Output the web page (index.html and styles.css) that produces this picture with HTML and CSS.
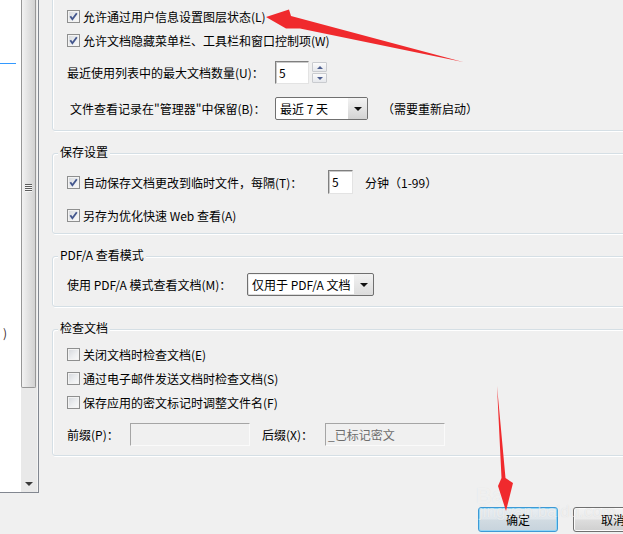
FILE: index.html
```html
<!DOCTYPE html>
<html lang="zh-CN">
<head>
<meta charset="utf-8">
<title>首选项</title>
<link rel="stylesheet" href="styles.css">
</head>
<body>
<div class="page">
  <aside class="sidebar">
    <div class="list">
      <div class="sel-line"></div>
      <div class="paren">)</div>
    </div>
    <div class="vscroll">
      <div class="thumb"><span class="grip"></span></div>
      <div class="track"></div>
      <div class="arrow-down"><i class="tri-s"></i></div>
    </div>
  </aside>

  <main class="content">
    <section class="group group-top">
      <div class="row">
        <label class="check"><span class="box on"><svg viewBox="0 0 11 11" width="11" height="11"><path d="M2.3 5.2 L4.4 8.2 L8.8 2.3" /></svg></span><span>允许通过用户信息设置图层状态(L)</span></label>
      </div>
      <div class="row">
        <label class="check"><span class="box on"><svg viewBox="0 0 11 11" width="11" height="11"><path d="M2.3 5.2 L4.4 8.2 L8.8 2.3" /></svg></span><span>允许文档隐藏菜单栏、工具栏和窗口控制项(W)</span></label>
      </div>
      <div class="row h23 mt9">
        <span class="lbl w208">最近使用列表中的最大文档数量(U)：</span>
        <span class="field spin-input">5</span>
        <span class="spin">
          <span class="spin-btn"><i class="tri-up"></i></span>
          <span class="spin-btn"><i class="tri-down"></i></span>
        </span>
      </div>
      <div class="row h23 mt13">
        <span class="lbl w208 pl3">文件查看记录在&quot;管理器&quot;中保留(B)：</span>
        <span class="combo w93"><span class="combo-text">最近 7 天</span><span class="combo-btn"><i class="tri"></i></span></span>
        <span class="note">（需要重新启动）</span>
      </div>
    </section>

    <fieldset class="group g2">
      <legend>保存设置</legend>
      <div class="gbody">
        <div class="row">
          <label class="check w261"><span class="box on"><svg viewBox="0 0 11 11" width="11" height="11"><path d="M2.3 5.2 L4.4 8.2 L8.8 2.3" /></svg></span><span>自动保存文档更改到临时文件，每隔(T)：</span></label>
          <span class="field num">5</span>
          <span class="unit">分钟（1-99）</span>
        </div>
        <div class="row mt9">
          <label class="check"><span class="box on"><svg viewBox="0 0 11 11" width="11" height="11"><path d="M2.3 5.2 L4.4 8.2 L8.8 2.3" /></svg></span><span>另存为优化快速 Web 查看(A)</span></label>
        </div>
      </div>
    </fieldset>

    <fieldset class="group g3">
      <legend>PDF/A 查看模式</legend>
      <div class="gbody">
        <div class="row h23">
          <span class="lbl w180">使用 PDF/A 模式查看文档(M)：</span>
          <span class="combo w127 inset"><span class="combo-text">仅用于 PDF/A 文档</span><span class="combo-btn"><i class="tri"></i></span></span>
        </div>
      </div>
    </fieldset>

    <fieldset class="group g4">
      <legend>检查文档</legend>
      <div class="gbody">
        <div class="row">
          <label class="check"><span class="box"></span><span>关闭文档时检查文档(E)</span></label>
        </div>
        <div class="row">
          <label class="check"><span class="box"></span><span>通过电子邮件发送文档时检查文档(S)</span></label>
        </div>
        <div class="row">
          <label class="check"><span class="box"></span><span>保存应用的密文标记时调整文件名(F)</span></label>
        </div>
        <div class="row h23 mt9">
          <span class="lbl w63">前缀(P)：</span>
          <span class="field dis"></span>
          <span class="lbl w63 ml12">后缀(X)：</span>
          <span class="field dis">_已标记密文</span>
        </div>
      </div>
    </fieldset>

    <div class="buttons">
      <button class="btn default" type="button">确定</button>
      <button class="btn" type="button">取消</button>
    </div>
  </main>

  <div class="wm-logo">Bai</div>
  <div class="wm-url">jingyan.baidu.com</div>

  <svg class="annot" width="623" height="534" viewBox="0 0 623 534">
    <path d="M266,17 L289,9.5 L291,16 L463,62 L300,28.5 L286,28.5 Z" fill="#f02a2d"/>
    <path d="M497,386 L505.5,478 L513,483 L506,511 L498,486 L501.5,478 Z" fill="#f02a2d"/>
  </svg>
</div>
</body>
</html>
```

FILE: styles.css
```css
* { box-sizing: border-box; }
html, body { margin: 0; padding: 0; background: #f0f0f0; }
body {
  font-family: "Microsoft YaHei", "Noto Sans CJK SC", sans-serif;
  font-size: 12px;
  color: #000;
}
.page {
  position: relative;
  width: 623px;
  height: 534px;
  overflow: hidden;
  display: flex;
  align-items: flex-start;
  background: #f0f0f0;
}

/* left navigation pane */
.sidebar {
  flex: none;
  display: flex;
  width: 39px;
  height: 493px;
  border-right: 1px solid #828790;
  border-bottom: 1px solid #828790;
}
.list { width: 21px; height: 100%; background: #fff; }
.sel-line { margin-top: 63px; width: 16px; height: 1px; background: #3399ff; }
.paren { margin-top: 261px; padding-left: 3px; line-height: 16px; color: #3a2a2a; }
.vscroll {
  width: 17px;
  height: 100%;
  display: flex;
  flex-direction: column;
  background: #e9e9e9;
  border-right: 1px solid #f4f4f4;
}
.thumb {
  flex: none;
  width: 15px;
  height: 388px;
  padding-top: 184px;
  border: 1px solid #979797;
  border-top: none;
  border-radius: 0 0 2px 2px;
  background: linear-gradient(to right, #f2f2f2 0%, #e3e3e3 45%, #d2d2d2 100%);
}
.grip {
  display: block;
  margin-left: 3px;
  width: 7px;
  height: 8px;
  background: repeating-linear-gradient(to bottom, #5c5c5c 0 1px, #f6f6f6 1px 2px);
}
.track { flex: 1; }
.arrow-down {
  flex: none;
  height: 17px;
  display: flex;
  align-items: center;
  justify-content: center;
}
.tri-s {
  width: 0; height: 0;
  border-left: 4px solid transparent;
  border-right: 4px solid transparent;
  border-top: 4px solid #3a3a3a;
}

/* main content */
.content {
  flex: none;
  margin-left: 13px;
  width: 640px;
  display: flex;
  flex-direction: column;
}
.group {
  border: 1px solid #d5dfe5;
  border-radius: 3px;
  box-shadow: inset 1px 1px 0 #fff, 1px 1px 0 #fff;
}
.group-top { margin-top: -20px; padding: 23px 0 10px 14px; }
fieldset.group { margin: 13px 0 0; min-width: 0; padding: 7px 0 6px 5px; }
fieldset.g3 { padding-bottom: 10px; }
fieldset.g4 { padding-top: 3px; padding-bottom: 9px; }
legend {
  padding: 0 2px 3px;
  line-height: 16px;
  background: #f0f0f0;
}
.gbody { padding-left: 9px; }

.row {
  display: flex;
  align-items: center;
  height: 24px;
  white-space: nowrap;
}
.row.h23 { height: 23px; }
.mt9 { margin-top: 9px; }
.mt13 { margin-top: 13px; }
.ml12 { margin-left: 12px; }
.pl3 { padding-left: 3px; }
.lbl { flex: none; }
.w208 { width: 208px; }
.w180 { width: 180px; }
.w63 { width: 63px; }
.w261 { width: 261px; flex: none; }

/* checkbox */
.check { display: flex; align-items: center; }
.box {
  flex: none;
  width: 13px;
  height: 13px;
  margin-right: 3px;
  border: 1px solid #8e8f8f;
  background: linear-gradient(135deg, #d3d6db 0%, #eceef0 55%, #fafafa 100%);
  box-shadow: inset 0 0 0 1px #f3f3f3;
  display: flex;
}
.box svg path { fill: none; stroke: #44578e; stroke-width: 1.9; }

/* text fields */
.field {
  flex: none;
  height: 23px;
  line-height: 21px;
  padding-left: 3px;
  border: 1px solid;
  border-color: #7f7f7f #e3e3e3 #e3e3e3 #7f7f7f;
  background: #fff;
  box-shadow: inset 1px 1px 0 #c9c9c9;
}
.spin-input { width: 34px; }
.num { width: 25px; height: 24px; line-height: 22px; }
.unit { margin-left: 12px; }
.field.dis {
  width: 120px;
  background: #f0f0f0;
  color: #6d6d6d;
  padding-left: 2px;
  border-color: #a5a5a5 #fafafa #fafafa #a5a5a5;
  box-shadow: none;
}

/* spin buttons */
.spin {
  flex: none;
  margin-left: 3px;
  width: 15px;
  display: flex;
  flex-direction: column;
  gap: 1px;
}
.spin-btn {
  height: 10px;
  border: 1px solid #c9cbcf;
  border-radius: 1px;
  background: linear-gradient(#fbfbfb, #e6e8ec);
  display: flex;
  align-items: center;
  justify-content: center;
}
.tri-up, .tri-down {
  width: 0; height: 0;
  border-left: 3px solid transparent;
  border-right: 3px solid transparent;
}
.tri-up { border-bottom: 3px solid #4d5e8f; }
.tri-down { border-top: 3px solid #4d5e8f; }

/* combo boxes */
.combo {
  flex: none;
  display: flex;
  height: 23px;
  border: 1px solid #707070;
  border-radius: 2px;
  background: #fff;
  overflow: hidden;
}
.w93 { width: 93px; }
.w127 { width: 127px; }
.combo-text {
  flex: 1;
  padding-left: 4px;
  line-height: 21px;
  white-space: nowrap;
  overflow: hidden;
}
.combo.inset { background: linear-gradient(#f2f2f2, #dcdcdc); padding: 1px 0 1px 1px; }
.combo.inset .combo-text { background: #fff; padding-left: 3px; line-height: 19px; }
.combo-btn {
  flex: none;
  width: 19px;
  background: linear-gradient(#f3f3f3, #e4e4e4 50%, #d3d3d3);
  display: flex;
  align-items: center;
  justify-content: center;
}
.combo.inset .combo-btn { background: transparent; }
.tri {
  width: 0; height: 0;
  border-left: 4px solid transparent;
  border-right: 4px solid transparent;
  border-top: 4px solid #111;
}
.note { margin-left: 14px; }

/* dialog buttons */
.buttons {
  display: flex;
  gap: 15px;
  margin-top: 51px;
  padding-left: 426px;
}
.btn {
  flex: none;
  width: 80px;
  height: 25px;
  padding: 0;
  font: inherit;
  color: #000;
  border: 1px solid #707070;
  border-radius: 3px;
  background: linear-gradient(#f2f2f2 0%, #ebebeb 48%, #dddddd 52%, #cfcfcf 100%);
  box-shadow: inset 0 0 0 1px #fbfbfb;
}
.btn.default {
  border-color: #3d9ad6;
  background: linear-gradient(#e9eef2 0%, #dfe6eb 48%, #d1dbe2 52%, #c7d3dc 100%);
  box-shadow: inset 0 0 0 1px #8fd6f6;
}

/* watermark + annotations (overlays) */
.wm-logo {
  position: absolute;
  left: 476px;
  top: 483px;
  font-family: "Liberation Sans", sans-serif;
  font-size: 22px;
  font-weight: bold;
  color: rgba(255, 255, 255, 0.55);
  text-shadow: 0 0 1px rgba(0, 0, 0, 0.08);
}
.wm-url {
  position: absolute;
  left: 479px;
  top: 502px;
  font-family: "Liberation Sans", sans-serif;
  font-size: 17px;
  color: rgba(255, 255, 255, 0.55);
  text-shadow: 0 0 1px rgba(0, 0, 0, 0.1);
}
.annot { position: absolute; left: 0; top: 0; pointer-events: none; }
```
